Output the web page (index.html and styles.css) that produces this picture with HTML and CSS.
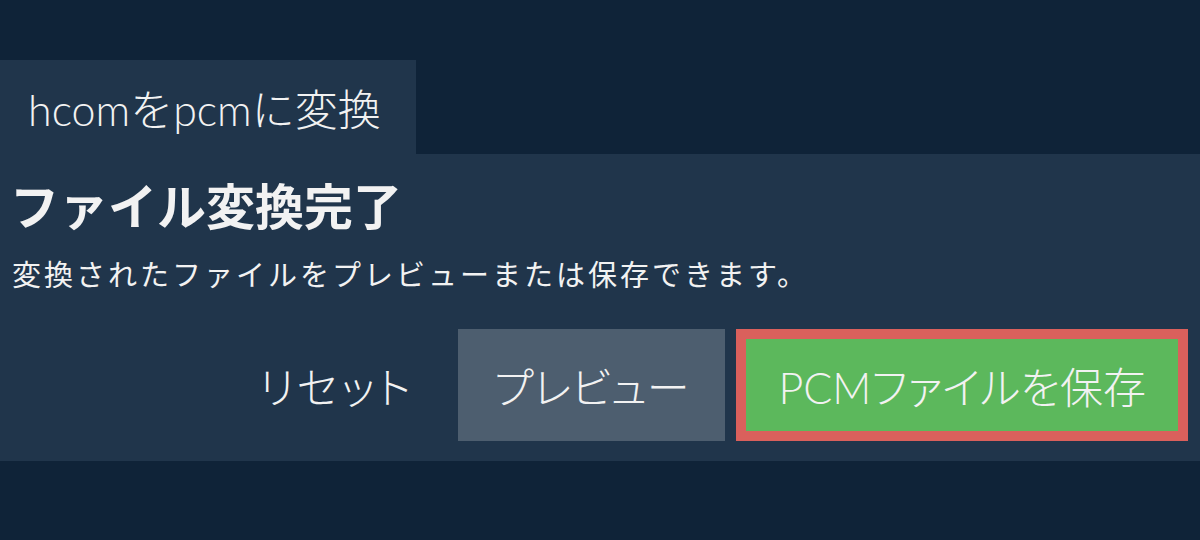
FILE: index.html
```html
<!DOCTYPE html>
<html lang="ja">
<head>
    <meta charset="utf-8">
    <title>hcomをpcmに変換</title>
    <link rel="stylesheet" href="styles.css">
</head>
<body>
    <div class="tab">hcomをpcmに変換</div>

    <div class="panel">
        <h1 class="title">ファイル変換完了</h1>
        <p class="subtitle">変換されたファイルをプレビューまたは保存できます。</p>

        <div class="actions">
            <button class="btn btn-reset">リセット</button>
            <button class="btn btn-preview">プレビュー</button>
            <button class="btn btn-save">PCMファイルを保存</button>
        </div>
    </div>
</body>
</html>
```

FILE: styles.css
```css
body {
    background-color: #0f2338;
    color: #f2f2f2;
    font-family: Lato, 'Noto Sans CJK JP', sans-serif;
    margin: 0;
    padding: 0;
}

.tab {
    display: flex;
    align-items: center;
    width: 388px;
    height: 94px;
    margin-top: 60px;
    padding-left: 28px;
    background-color: #20354b;
    font-size: 43px;
    font-weight: 300;
}

.panel {
    background-color: #20354b;
    padding: 23px 12px 20px 10px;
}

.title {
    margin: 0 0 20px 0;
    font-size: 49px;
    font-weight: bold;
    line-height: 58px;
}

.subtitle {
    margin: 0 0 34px 2px;
    font-size: 29px;
    line-height: 40px;
    letter-spacing: 3px;
}

.actions {
    display: flex;
    justify-content: flex-end;
    gap: 11px;
}

.btn {
    height: 112px;
    padding: 0 36px;
    border: none;
    color: #f2f2f2;
    font-family: Lato, 'Noto Sans CJK JP', sans-serif;
    font-size: 43px;
    font-weight: 300;
    font-feature-settings: "palt";
}

.btn-reset {
    background: transparent;
    letter-spacing: 3px;
    padding-right: 33px;
}

.btn-preview {
    background-color: #4d5e6f;
}

.btn-save {
    background-color: #5cb85c;
    border: 10px solid #da605c;
    padding: 0 32px;
}
```
